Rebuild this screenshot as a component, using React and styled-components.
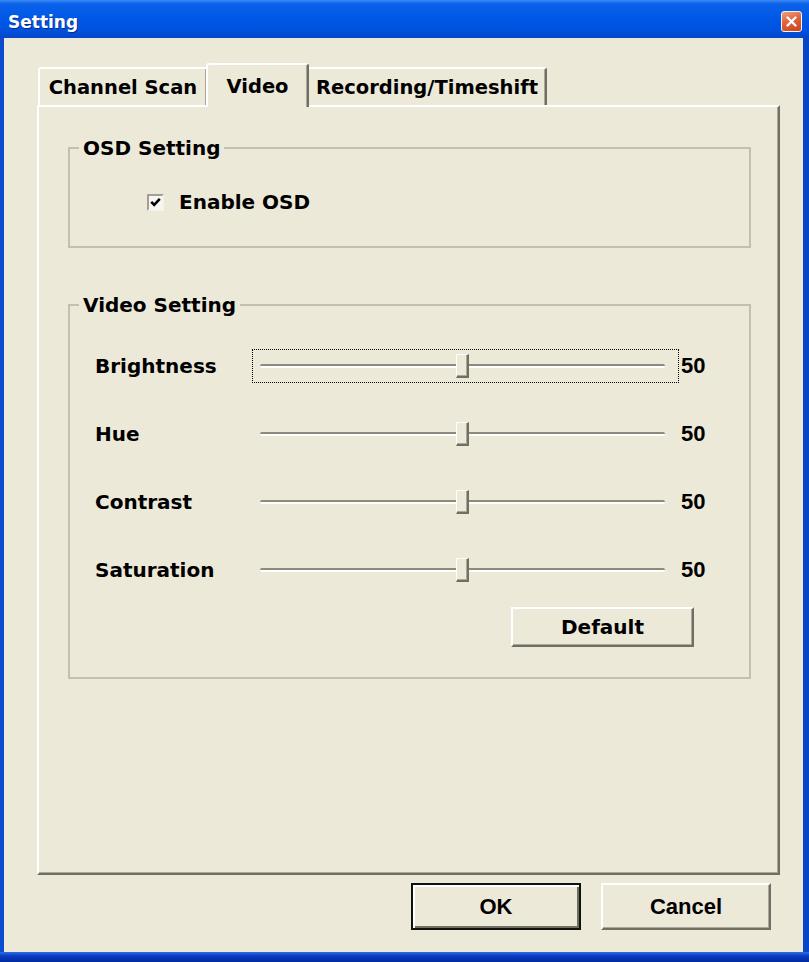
import React from 'react';
import styled, { createGlobalStyle } from 'styled-components';

const GlobalStyle = createGlobalStyle`
  html, body {
    margin: 0;
    padding: 0;
    background: #ffffff;
  }
`;

const Window = styled.div`
  width: 809px;
  height: 962px;
  display: flex;
  flex-direction: column;
  background: linear-gradient(90deg, #0a4bd0 0%, #0b55e0 50%, #0846c6 100%);
  overflow: hidden;
`;

const TitleBar = styled.div`
  height: 38px;
  box-sizing: border-box;
  display: flex;
  align-items: center;
  padding: 5px 7px 0 8px;
  background: linear-gradient(
    180deg,
    #3a8cf6 0%,
    #0c62ea 10%,
    #0058e6 45%,
    #0052de 80%,
    #0645c8 100%
  );
  color: #ffffff;
  font-family: 'DejaVu Sans', 'Liberation Sans', sans-serif;
  font-weight: bold;
  font-size: 17px;
  text-shadow: 1px 1px 0 #0b2a86;
`;

const CloseButton = styled.div`
  margin-left: auto;
  width: 21px;
  height: 21px;
  box-sizing: border-box;
  border: 1px solid #f4f4f4;
  border-radius: 3px;
  background: linear-gradient(160deg, #f0a080 0%, #e2623c 45%, #c6431c 100%);
  display: grid;
  place-items: center;
`;

const Body = styled.div`
  flex: 1;
  display: flex;
  flex-direction: column;
  margin: 0 6px 0 4px;
  padding: 25px 23px 22px 33px;
  background: #ece9d8;
  font-family: 'DejaVu Sans', 'Liberation Sans', sans-serif;
  font-weight: bold;
  color: #000;
`;

const TabRow = styled.div`
  display: flex;
  align-items: flex-end;
  padding-left: 1px;
`;

const Tab = styled.div`
  position: relative;
  z-index: ${({ $active }) => ($active ? 2 : 1)};
  width: ${({ $w }) => $w}px;
  height: ${({ $active }) => ($active ? 44 : 38)}px;
  margin: ${({ $active }) => ($active ? '0 -2px -2px -2px' : '0')};
  box-sizing: border-box;
  display: flex;
  align-items: center;
  justify-content: center;
  background: #ece9d8;
  border-top: 2px solid #ffffff;
  border-left: 2px solid #ffffff;
  border-right: 2px solid #716f64;
  border-radius: 3px 3px 0 0;
  box-shadow: inset -1px 0 0 #aca899;
  font-size: 19.5px;
  white-space: nowrap;
`;

const Panel = styled.div`
  flex: 1;
  display: flex;
  flex-direction: column;
  gap: 45px;
  padding: 29px 27px 0 29px;
  border-top: 2px solid #ffffff;
  border-left: 2px solid #ffffff;
  border-right: 2px solid #716f64;
  border-bottom: 2px solid #716f64;
  box-shadow: inset -1px -1px 0 #aca899;
`;

const Group = styled.fieldset`
  margin: 0;
  padding: 0;
  min-width: 0;
  border: 2px solid #c3c0b0;
`;

const Legend = styled.legend`
  margin-left: 9px;
  padding: 0 4px;
  font-size: 20px;
  line-height: 24px;
`;

const OsdBody = styled.div`
  padding: 30px 0 32px 77px;
`;

const CheckRow = styled.label`
  display: flex;
  align-items: center;
  gap: 15px;
  height: 24px;
  font-size: 20px;
`;

const CheckBox = styled.span`
  width: 17px;
  height: 17px;
  box-sizing: border-box;
  border: 2px solid;
  border-color: #a3a092 #f4f3ee #f4f3ee #a3a092;
  background: #f7f6f2;
  display: grid;
  place-items: center;
`;

const VideoBody = styled.div`
  display: flex;
  flex-direction: column;
  padding: 31px 0 30px 25px;
`;

const Rows = styled.div`
  display: grid;
  grid-auto-rows: 36px;
  row-gap: 32px;
`;

const Row = styled.div`
  display: grid;
  grid-template-columns: 157px 427px auto;
  align-items: center;
`;

const Label = styled.span`
  font-size: 20px;
`;

const Slider = styled.div`
  height: 34px;
  box-sizing: border-box;
  display: flex;
  align-items: center;
  padding: 0 13px 0 7px;
  border: 1px ${({ $focused }) => ($focused ? 'dotted #000' : 'solid transparent')};
`;

const Track = styled.div`
  position: relative;
  flex: 1;
  height: 4px;
  border-radius: 2px;
  background: linear-gradient(180deg, #8d8a7c 0 50%, #ffffff 50% 100%);
`;

const Thumb = styled.div`
  position: absolute;
  top: -10px;
  width: 13px;
  height: 24px;
  box-sizing: border-box;
  background: #ece9d8;
  border-top: 1px solid #ffffff;
  border-left: 1px solid #ffffff;
  border-right: 2px solid #716f64;
  border-bottom: 2px solid #716f64;
  box-shadow: inset -1px -1px 0 #aca899;
`;

const Value = styled.span`
  margin-left: 2px;
  font-family: 'Liberation Sans', Arial, sans-serif;
  font-size: 22px;
`;

const Button = styled.div`
  width: ${({ $w }) => $w}px;
  height: ${({ $h }) => $h}px;
  box-sizing: border-box;
  display: flex;
  align-items: center;
  justify-content: center;
  background: #ece9d8;
  border: 2px solid;
  border-color: #ffffff #716f64 #716f64 #ffffff;
  box-shadow: inset -1px -1px 0 #aca899;
  font-size: 20px;
`;

const DefaultButton = styled(Button)`
  align-self: flex-end;
  margin: 19px 55px 0 0;
`;

const DialogButton = styled(Button)`
  font-family: 'Liberation Sans', Arial, sans-serif;
  font-size: 22px;
  ${({ $primary }) =>
    $primary &&
    `
    border: 2px solid #111;
    box-shadow: inset 2px 2px 0 #ffffff, inset -2px -2px 0 #716f64;
  `}
`;

const ButtonRow = styled.div`
  display: flex;
  justify-content: flex-end;
  gap: 20px;
  margin-top: 8px;
  padding-right: 9px;
`;

const FrameBottom = styled.div`
  height: 10px;
  background: linear-gradient(180deg, #2d6de6 0%, #0a3cc0 40%, #002a9e 100%);
`;

const settings = [
  { label: 'Brightness', value: 50, focused: true },
  { label: 'Hue', value: 50 },
  { label: 'Contrast', value: 50 },
  { label: 'Saturation', value: 50 },
];

const SliderRow = ({ label, value, focused }) => (
  <Row>
    <Label>{label}</Label>
    <Slider $focused={focused}>
      <Track>
        <Thumb style={{ left: `calc((100% - 13px) * ${value / 100})` }} />
      </Track>
    </Slider>
    <Value>{value}</Value>
  </Row>
);

const App = () => (
  <>
    <GlobalStyle />
    <Window>
      <TitleBar>
        Setting
        <CloseButton>
          <svg width="13" height="13" viewBox="0 0 13 13">
            <path d="M2.5 2.5 L10.5 10.5 M10.5 2.5 L2.5 10.5" stroke="#fff" strokeWidth="2.4" strokeLinecap="round" />
          </svg>
        </CloseButton>
      </TitleBar>
      <Body>
        <TabRow>
          <Tab $w={170}>Channel Scan</Tab>
          <Tab $w={103} $active>
            Video
          </Tab>
          <Tab $w={240}>Recording/Timeshift</Tab>
        </TabRow>
        <Panel>
          <Group>
            <Legend>OSD Setting</Legend>
            <OsdBody>
              <CheckRow>
                <CheckBox>
                  <svg width="11" height="11" viewBox="0 0 11 11">
                    <path d="M1.2 4.8 L4.2 7.8 L9.8 1.8" fill="none" stroke="#000" strokeWidth="2.6" />
                  </svg>
                </CheckBox>
                Enable OSD
              </CheckRow>
            </OsdBody>
          </Group>
          <Group>
            <Legend>Video Setting</Legend>
            <VideoBody>
              <Rows>
                {settings.map((s) => (
                  <SliderRow key={s.label} {...s} />
                ))}
              </Rows>
              <DefaultButton $w={183} $h={40}>
                Default
              </DefaultButton>
            </VideoBody>
          </Group>
        </Panel>
        <ButtonRow>
          <DialogButton $w={170} $h={47} $primary>
            OK
          </DialogButton>
          <DialogButton $w={170} $h={47}>
            Cancel
          </DialogButton>
        </ButtonRow>
      </Body>
      <FrameBottom />
    </Window>
  </>
);

export default App;
